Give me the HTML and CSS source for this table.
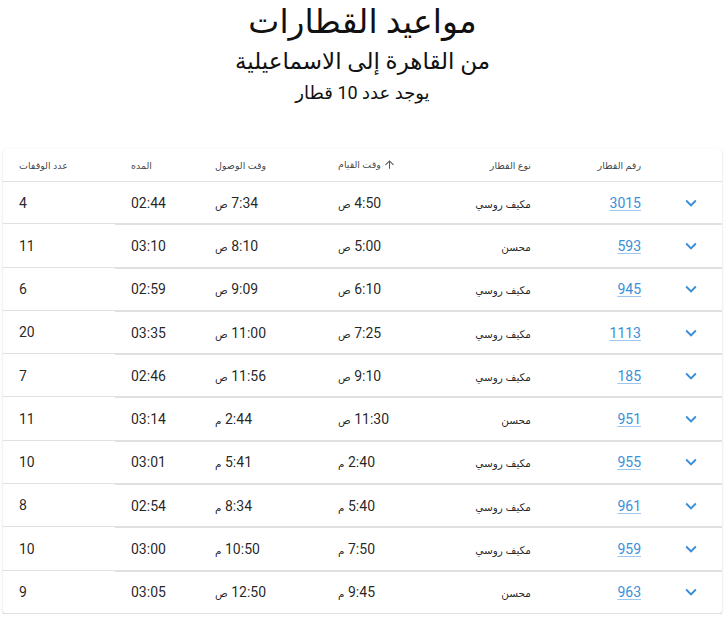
FILE: index.html
```html
<!DOCTYPE html>
<html lang="ar" dir="rtl">
<head>
    <meta charset="UTF-8">
    <meta name="viewport" content="width=device-width, initial-scale=1.0">
    <title>مواعيد القطارات</title>
    <link rel="stylesheet" href="styles.css">
</head>
<body>
    <div class="page">
        <header class="heading">
            <h1>مواعيد القطارات</h1>
            <h2>من القاهرة إلى الاسماعيلية</h2>
            <p class="count">يوجد عدد 10 قطار</p>
        </header>

        <div class="paper">
            <table class="trains">
                <colgroup>
                    <col class="c-toggle">
                    <col class="c-number">
                    <col class="c-type">
                    <col class="c-depart">
                    <col class="c-arrive">
                    <col class="c-duration">
                    <col class="c-stops">
                </colgroup>
                <thead>
                    <tr>
                        <th></th>
                        <th>رقم القطار</th>
                        <th>نوع القطار</th>
                        <th class="left">
                            <span class="sort">
                                <svg class="sort-icon" viewBox="0 0 24 24"><path d="M4 12l1.41 1.41L11 7.83V20h2V7.83l5.58 5.59L20 12l-8-8-8 8z"/></svg>
                                وقت القيام
                            </span>
                        </th>
                        <th class="left">وقت الوصول</th>
                        <th class="left">المده</th>
                        <th class="left">عدد الوقفات</th>
                    </tr>
                </thead>
                <tbody id="rows">
                    <!-- rows are filled by the script below -->
                </tbody>
            </table>
        </div>
    </div>

    <script>
        document.addEventListener('DOMContentLoaded', function() {
            const trains = [
                { number: '3015', type: 'مكيف روسي', depart: ['4:50', 'ص'], arrive: ['7:34', 'ص'], duration: '02:44', stops: 4 },
                { number: '593', type: 'محسن', depart: ['5:00', 'ص'], arrive: ['8:10', 'ص'], duration: '03:10', stops: 11 },
                { number: '945', type: 'مكيف روسي', depart: ['6:10', 'ص'], arrive: ['9:09', 'ص'], duration: '02:59', stops: 6 },
                { number: '1113', type: 'مكيف روسي', depart: ['7:25', 'ص'], arrive: ['11:00', 'ص'], duration: '03:35', stops: 20 },
                { number: '185', type: 'مكيف روسي', depart: ['9:10', 'ص'], arrive: ['11:56', 'ص'], duration: '02:46', stops: 7 },
                { number: '951', type: 'محسن', depart: ['11:30', 'ص'], arrive: ['2:44', 'م'], duration: '03:14', stops: 11 },
                { number: '955', type: 'مكيف روسي', depart: ['2:40', 'م'], arrive: ['5:41', 'م'], duration: '03:01', stops: 10 },
                { number: '961', type: 'مكيف روسي', depart: ['5:40', 'م'], arrive: ['8:34', 'م'], duration: '02:54', stops: 8 },
                { number: '959', type: 'مكيف روسي', depart: ['7:50', 'م'], arrive: ['10:50', 'م'], duration: '03:00', stops: 10 },
                { number: '963', type: 'محسن', depart: ['9:45', 'م'], arrive: ['12:50', 'ص'], duration: '03:05', stops: 9 }
            ];
            const chevron = '<svg class="chevron" viewBox="0 0 24 24"><path d="M7.41 8.59 12 13.17l4.59-4.58L18 10l-6 6-6-6 1.41-1.41z"/></svg>';
            const rows = document.getElementById('rows');

            function time(t) {
                return `<span dir="rtl">${t[0]} <span class="ar">${t[1]}</span></span>`;
            }

            trains.forEach(function(train) {
                const main = document.createElement('tr');
                main.className = 'row';
                main.innerHTML = `
                    <td class="toggle"><button class="expand" type="button">${chevron}</button></td>
                    <td><a href="#" class="train-link">${train.number}</a></td>
                    <td><span class="ar">${train.type}</span></td>
                    <td class="left">${time(train.depart)}</td>
                    <td class="left">${time(train.arrive)}</td>
                    <td class="left">${train.duration}</td>
                    <td class="left">${train.stops}</td>
                `;
                const detail = document.createElement('tr');
                detail.className = 'detail';
                detail.innerHTML = '<td colspan="6"></td>';
                rows.appendChild(main);
                rows.appendChild(detail);
            });
        });
    </script>
</body>
</html>
```

FILE: styles.css
```css
body {
    margin: 0;
    font-family: 'Roboto', 'DejaVu Sans', sans-serif;
    color: rgba(0, 0, 0, 0.87);
    background: #fff;
}

.page {
    padding: 0 6px 0 3px;
}

.heading {
    text-align: center;
    margin-bottom: 43px;
}

.heading h1 {
    margin: 0;
    padding-top: 2px;
    font-size: 33px;
    font-weight: 400;
    line-height: 40px;
    color: #111;
}

.heading h2 {
    margin: 4px 0 0;
    font-size: 23px;
    font-weight: 400;
    line-height: 32px;
    color: #111;
}

.heading .count {
    margin: 2px 0 0;
    font-size: 18px;
    line-height: 26px;
    color: #111;
}

.paper {
    background: #fff;
    border-radius: 4px;
    box-shadow: 0 2px 1px -1px rgba(0, 0, 0, 0.2), 0 1px 1px 0 rgba(0, 0, 0, 0.14), 0 1px 3px 0 rgba(0, 0, 0, 0.12);
    overflow: hidden;
}

.trains {
    width: 100%;
    border-collapse: collapse;
    table-layout: fixed;
}

.c-toggle { width: 65px; }
.c-number { width: 110px; }
.c-type { width: 117px; }
.c-depart { width: 108px; }
.c-arrive { width: 123px; }
.c-duration { width: 84px; }
.c-stops { width: 112px; }

.trains th,
.trains td {
    padding: 0 16px;
    text-align: right;
    border-bottom: 1px solid #e0e0e0;
    white-space: nowrap;
}

.trains th.left,
.trains td.left {
    text-align: left;
}

.trains th {
    height: 32px;
    font-size: 9.5px;
    font-weight: 400;
    color: rgba(0, 0, 0, 0.75);
}

.sort {
    display: inline-flex;
    align-items: center;
    gap: 2px;
}

.sort-icon {
    width: 13px;
    height: 13px;
    fill: rgba(0, 0, 0, 0.65);
}

.row td {
    height: 41.3px;
    font-size: 14px;
}

.ar {
    font-size: 10.5px;
}

.toggle {
    text-align: center;
}

.expand {
    background: none;
    border: none;
    padding: 4px;
    margin: 0;
    display: inline-flex;
    cursor: pointer;
}

.chevron {
    width: 22px;
    height: 22px;
    fill: #3b8fd9;
}

.train-link {
    color: #3b8fd9;
    text-decoration: underline;
    text-decoration-color: rgba(59, 143, 217, 0.5);
    text-underline-offset: 2px;
}

.detail td {
    height: 0;
    padding: 0;
}

.trains tbody tr:last-child td {
    border-bottom: none;
}
```
